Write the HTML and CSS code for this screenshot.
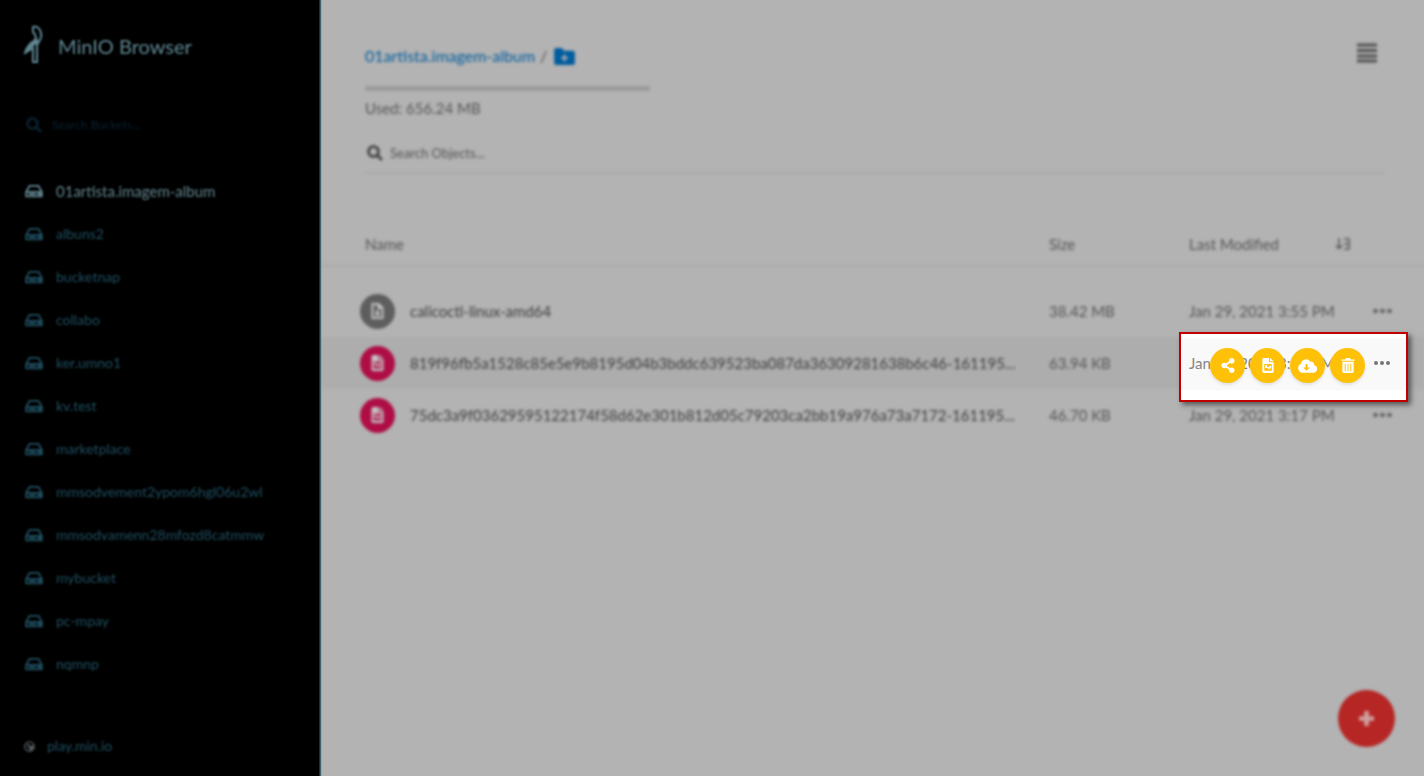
FILE: index.html
```html
<!DOCTYPE html>
<html lang="en">

<head>
    <meta charset="UTF-8">
    <meta name="viewport" content="width=device-width, initial-scale=1.0">
    <title>MinIO Browser</title>
    <link rel="stylesheet" href="styles.css">
</head>

<body>
    <!-- shared icons -->
    <svg class="defs" aria-hidden="true">
        <symbol id="i-disk" viewBox="0 0 20 16">
            <path d="M5 2h10l4 7v5H1V9zM1 9h18M4 11.5h8" fill="none" stroke="currentColor" stroke-width="2" stroke-linejoin="round" />
            <path d="M14 10h4v3h-4z" fill="currentColor" />
        </symbol>
        <symbol id="i-search" viewBox="0 0 16 16">
            <path d="M6.500 1.500a5 5 0 1 0 0 10 5 5 0 0 0 0-10zM10 10l5 5" fill="none" stroke="currentColor" stroke-width="2.600" />
        </symbol>
        <symbol id="i-image" viewBox="0 0 12 16">
            <path d="M1.500 0H7v4.500h5v10a1.500 1.500 0 0 1-1.500 1.500h-9A1.500 1.500 0 0 1 0 14.500v-13A1.500 1.500 0 0 1 1.500 0zM8 0l4 3.500H8zM2 6.500v7h8v-7z" fill="currentColor" fill-rule="evenodd" />
            <path d="M3 7.500h2v2h1.500L8.500 8l1 1v1L7 12l-2-1.500-2 .500z" fill="currentColor" />
        </symbol>
    </svg>

    <div class="app">
        <aside class="sidebar">
            <header class="brand">
                <svg class="logo" viewBox="0 0 20 40">
                    <path d="M9 3c5-2 9 4 8 10-1 4-3 6-4 8v17h-4V24l-8 5c2-7 5-10 10-13 2-3 0-6-2-8z" fill="none" stroke="currentColor" stroke-width="2" />
                    <path d="M3 26c3-5 7-6 11-10" stroke="currentColor" stroke-width="4" />
                </svg>
                <h1>MinIO Browser</h1>
            </header>
            <label class="bucket-search">
                <svg class="search-icon"><use href="#i-search" /></svg>
                <input type="text" placeholder="Search Buckets..." aria-label="Search Buckets">
            </label>
            <nav>
                <ul class="buckets">
                    <li class="active"><a href="#"><svg><use href="#i-disk" /></svg>01artista.imagem-album</a></li>
                    <li><a href="#"><svg><use href="#i-disk" /></svg>albuns2</a></li>
                    <li><a href="#"><svg><use href="#i-disk" /></svg>bucketnap</a></li>
                    <li><a href="#"><svg><use href="#i-disk" /></svg>collabo</a></li>
                    <li><a href="#"><svg><use href="#i-disk" /></svg>ker.umno1</a></li>
                    <li><a href="#"><svg><use href="#i-disk" /></svg>kv.test</a></li>
                    <li><a href="#"><svg><use href="#i-disk" /></svg>marketplace</a></li>
                    <li><a href="#"><svg><use href="#i-disk" /></svg>mmsodvement2ypom6hgl06u2wl</a></li>
                    <li><a href="#"><svg><use href="#i-disk" /></svg>mmsodvamenn28mfozd8catmmw</a></li>
                    <li><a href="#"><svg><use href="#i-disk" /></svg>mybucket</a></li>
                    <li><a href="#"><svg><use href="#i-disk" /></svg>pc-mpay</a></li>
                    <li><a href="#"><svg><use href="#i-disk" /></svg>nqmnp</a></li>
                </ul>
            </nav>
            <a class="host" href="#">
                <svg viewBox="0 0 12 12"><circle cx="6" cy="6" r="5" fill="none" stroke="currentColor" stroke-width="1.500" /><path d="M3 3l3 1 1 2 3-2v4l-3 3z" fill="currentColor" /></svg>
                play.min.io
            </a>
        </aside>

        <main class="main">
            <header class="top">
                <div class="path">
                    <a href="#">01artista.imagem-album</a>
                    <span>/</span>
                    <button class="new-folder" aria-label="Choose or create new path">
                        <svg viewBox="0 0 22 18"><path d="M2 0h6l2.500 3H20a2 2 0 0 1 2 2v11a2 2 0 0 1-2 2H2a2 2 0 0 1-2-2V2a2 2 0 0 1 2-2z" fill="currentColor" /><path d="M11 7v7M7.500 10.500h7" stroke="#b3b3b3" stroke-width="2" /></svg>
                    </button>
                </div>
                <button class="menu" aria-label="Menu">
                    <svg viewBox="0 0 20 20"><path d="M0 2h20M0 7.500h20M0 13h20M0 18h20" stroke="currentColor" stroke-width="3" /></svg>
                </button>
            </header>
            <div class="usage">
                <div class="bar"></div>
                <p>Used: 656.24 MB</p>
            </div>
            <label class="object-search">
                <svg class="search-icon"><use href="#i-search" /></svg>
                <input type="text" placeholder="Search Objects..." aria-label="Search Objects">
            </label>

            <table class="objects">
                <colgroup>
                    <col>
                    <col class="col-size">
                    <col class="col-date">
                    <col class="col-more">
                </colgroup>
                <thead>
                    <tr>
                        <th>Name</th>
                        <th>Size</th>
                        <th>Last Modified
                            <svg class="sort" viewBox="0 0 14 12"><path d="M3 0v10M0 7.500l3 3 3-3M8 1h5v10H8M8 6h4" fill="none" stroke="currentColor" stroke-width="1.500" /></svg>
                        </th>
                        <th></th>
                    </tr>
                </thead>
                <tbody>
                    <tr>
                        <td>
                            <div class="name">
                                <span class="type"><svg viewBox="0 0 12 16"><path d="M1 1h6l4 4v10H1zM7 1v4h4M6 7v5M4 10l2 2 2-2" fill="none" stroke="currentColor" stroke-width="2" /></svg></span>
                                <a href="#">calicoctl-linux-amd64</a>
                            </div>
                        </td>
                        <td>38.42 MB</td>
                        <td>Jan 29, 2021 3:55 PM</td>
                        <td><button class="more" aria-label="Actions"><i></i><i></i><i></i></button></td>
                    </tr>
                    <tr class="hover">
                        <td>
                            <div class="name">
                                <span class="type image"><svg><use href="#i-image" /></svg></span>
                                <a href="#">819f96fb5a1528c85e5e9b8195d04b3bddc639523ba087da36309281638b6c46-161195...</a>
                            </div>
                        </td>
                        <td>63.94 KB</td>
                        <td></td>
                        <td></td>
                    </tr>
                    <tr>
                        <td>
                            <div class="name">
                                <span class="type image"><svg><use href="#i-image" /></svg></span>
                                <a href="#">75dc3a9f03629595122174f58d62e301b812d05c79203ca2bb19a976a73a7172-161195...</a>
                            </div>
                        </td>
                        <td>46.70 KB</td>
                        <td>Jan 29, 2021 3:17 PM</td>
                        <td><button class="more" aria-label="Actions"><i></i><i></i><i></i></button></td>
                    </tr>
                </tbody>
            </table>

            <button class="fab" aria-label="Add">
                <svg viewBox="0 0 16 16"><path d="M8 0v16M0 8h16" stroke="currentColor" stroke-width="5" /></svg>
            </button>
        </main>
    </div>

    <!-- open row actions -->
    <section class="focus-box">
        <div class="focus-row">
            <span>Jan 29, 2021 3:17 PM</span>
            <button class="more" aria-label="Actions"><i></i><i></i><i></i></button>
        </div>
        <div class="actions">
            <button aria-label="Share">
                <svg viewBox="0 0 448 512"><path fill="currentColor" d="M352 320c-22.608 0-43.387 7.819-59.790 20.895l-102.486-64.054a96.551 96.551 0 0 0 0-41.683l102.486-64.054C308.613 184.181 329.392 192 352 192c53.019 0 96-42.981 96-96S405.019 0 352 0s-96 42.981-96 96c0 7.158.790 14.130 2.276 20.841L155.790 180.895C139.387 167.819 118.608 160 96 160c-53.019 0-96 42.981-96 96s42.981 96 96 96c22.608 0 43.387-7.819 59.790-20.895l102.486 64.054A96.301 96.301 0 0 0 256 416c0 53.019 42.981 96 96 96s96-42.981 96-96-42.981-96-96-96z" /></svg>
            </button>
            <button aria-label="Preview">
                <svg><use href="#i-image" /></svg>
            </button>
            <button aria-label="Download">
                <svg class="wide" viewBox="0 0 20 14"><path fill="currentColor" fill-rule="evenodd" d="M5 14a5 5 0 0 1-2-9.500A5.500 5.500 0 0 1 13 2.500a3.200 3.200 0 0 1 4 3.600A4 4 0 0 1 16 14zM8 5v3.500H5.500L9 12l3.500-3.500H10V5z" /></svg>
            </button>
            <button aria-label="Delete">
                <svg viewBox="0 0 14 16"><path fill="currentColor" fill-rule="evenodd" d="M0 1.500h4L5 0h4l1 1.500h4V3H0zM1 4h12v10.500a1.500 1.500 0 0 1-1.500 1.500h-9A1.500 1.500 0 0 1 1 14.500zM3.500 6v8h1V6zM6.500 6v8h1V6zM9.500 6v8h1V6z" /></svg>
            </button>
        </div>
    </section>
</body>

</html>
```

FILE: styles.css
```css
* {
    margin: 0;
    padding: 0;
    box-sizing: border-box;
}

body {
    position: relative;
    font: 15px/20px Lato, sans-serif;
    color: #555;
    background: #b3b3b3;
}

a {
    color: inherit;
    text-decoration: none;
}

button,
input {
    font: inherit;
    color: inherit;
    border: 0;
    background: none;
    outline: 0;
}

input::placeholder {
    color: inherit;
    opacity: 1;
}

svg {
    display: block;
    flex: none;
}

.defs {
    position: absolute;
    width: 0;
    height: 0;
}

.app {
    display: grid;
    grid-template-columns: 320px 1fr;
    min-height: 100vh;
}

/* sidebar */
.sidebar {
    position: relative;
    z-index: 1;
    display: flex;
    flex-direction: column;
    padding: 24px 24px 20px;
    color: #1f4f60;
    font-size: 14px;
    background: #000;
    border-right: 1px solid #0b3543;
    box-shadow: 1px 0 1px #41616b;
}

.sidebar > * {
    filter: blur(1px);
}

.brand {
    display: flex;
    align-items: center;
    gap: 14px;
    color: #5f8793;
}

.brand h1 {
    font-size: 20px;
    font-weight: 400;
    line-height: 24px;
    padding-top: 4px;
}

.logo {
    width: 20px;
    height: 40px;
}

.search-icon {
    width: 16px;
    height: 16px;
}

.bucket-search {
    display: flex;
    align-items: center;
    gap: 10px;
    height: 24px;
    margin-top: 49px;
    padding-left: 2px;
    color: #0a2230;
    font-size: 12px;
}

.bucket-search input {
    width: 100%;
}

.buckets {
    list-style: none;
    margin-top: 32px;
}

.buckets a {
    display: flex;
    align-items: center;
    gap: 12px;
    height: 43px;
}

.buckets svg {
    width: 20px;
    height: 14px;
}

.buckets .active {
    color: #62858e;
    font-size: 15px;
}

.host {
    display: flex;
    align-items: center;
    gap: 12px;
    margin-top: auto;
}

.host svg {
    width: 11px;
    height: 11px;
    color: #5b6063;
}

/* main */
.main {
    position: relative;
    min-width: 0;
    filter: blur(1.4px);
}

.top {
    display: flex;
    justify-content: space-between;
    padding: 43px 47px 0 45px;
}

.path {
    display: flex;
    align-items: center;
    gap: 5px;
    height: 26px;
    font-size: 16px;
}

.path a,
.new-folder {
    color: #005c9e;
}

.new-folder {
    margin-left: 2px;
}

.new-folder svg {
    width: 21px;
    height: 17px;
}

.menu {
    height: 20px;
    color: #4f4f4f;
}

.menu svg {
    width: 20px;
    height: 20px;
}

.usage {
    width: 285px;
    margin: 17px 0 0 45px;
}

.bar {
    height: 5px;
    margin-bottom: 7px;
    background: #9b9b9b;
}

.object-search {
    display: flex;
    align-items: center;
    gap: 7px;
    height: 40px;
    margin: 16px 39px 0 45px;
    padding-left: 2px;
    font-size: 13px;
    border-bottom: 2px solid #aaa;
}

.object-search svg {
    color: #3c3c3c;
}

.object-search input {
    flex: 1;
}

.objects {
    width: 100%;
    margin-top: 48px;
    table-layout: fixed;
    border-collapse: collapse;
}

.col-size {
    width: 140px;
}

.col-date {
    width: 184px;
}

.col-more {
    width: 51px;
}

.objects th {
    height: 44px;
    font-weight: 400;
    text-align: left;
    border-bottom: 2px solid #aaa;
}

.objects th:first-child {
    padding-left: 45px;
}

.objects td {
    height: 52px;
    white-space: nowrap;
}

.objects tbody::before {
    content: "";
    display: block;
    height: 18px;
}

.objects .hover {
    background: #adadad;
}

.sort {
    float: right;
    width: 14px;
    height: 12px;
    margin: 4px 23px 0 0;
}

.name {
    display: flex;
    align-items: center;
    gap: 15px;
    padding-left: 40px;
    color: #3d3d3d;
}

.type {
    display: grid;
    place-items: center;
    width: 35px;
    height: 35px;
    color: #c4c4c4;
    background: #5e5e5e;
    border-radius: 50%;
}

.type svg {
    width: 13px;
    height: 16px;
}

.image {
    background: #ae0d45;
}

.more {
    display: flex;
    gap: 2px;
}

.more i {
    width: 4px;
    height: 4px;
    background: #757575;
    border-radius: 50%;
}

.objects .more i {
    width: 5px;
    background: #5a5a5a;
}

.fab {
    position: absolute;
    right: 29px;
    bottom: 29px;
    display: grid;
    place-items: center;
    width: 57px;
    height: 57px;
    color: #d0a0a0;
    background: #b52625;
    border-radius: 50%;
}

.fab svg {
    width: 15px;
    height: 15px;
}

/* highlighted actions */
.focus-box {
    position: absolute;
    top: 332px;
    right: 16px;
    width: 229px;
    height: 70px;
    padding-top: 4px;
    color: #858585;
    background: #fff;
    border: 2px solid #c00000;
    box-shadow: 3px 3px 5px rgba(0, 0, 0, .5);
}

.focus-row {
    display: flex;
    align-items: center;
    justify-content: space-between;
    height: 52px;
    padding: 0 16px 2px 8px;
    background: #f9f9f9;
}

.actions {
    position: absolute;
    top: 14px;
    right: 41px;
    display: flex;
    gap: 5px;
}

.actions button {
    display: grid;
    place-items: center;
    width: 35px;
    height: 35px;
    color: #fff;
    background: #ffc107;
    border-radius: 50%;
    box-shadow: 0 2px 3px rgba(0, 0, 0, .1);
}

.actions svg {
    width: 14px;
    height: 15px;
}

.actions .wide {
    width: 19px;
    height: 14px;
}
```
